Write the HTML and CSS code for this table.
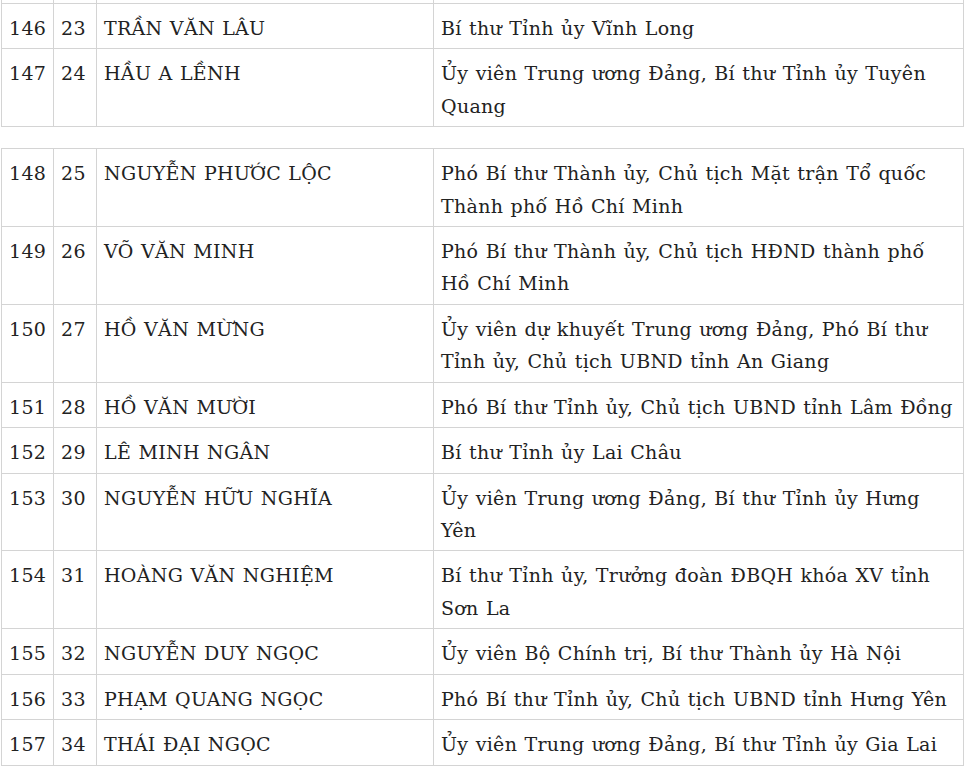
FILE: index.html
```html
<!DOCTYPE html>
<html lang="vi">
<head>
<meta charset="utf-8">
<title>Danh sách</title>
<link rel="stylesheet" href="styles.css">
</head>
<body>
<div class="sheet">
<table class="list list-first">
<colgroup><col class="c1"><col class="c2"><col class="c3"><col class="c4"></colgroup>
<tr class="spacer"><td></td><td></td><td></td><td></td></tr>
<tr><td>146</td><td>23</td><td>TRẦN VĂN LÂU</td><td>Bí thư Tỉnh ủy Vĩnh Long</td></tr>
<tr><td>147</td><td>24</td><td>HẦU A LỀNH</td><td>Ủy viên Trung ương Đảng, Bí thư Tỉnh ủy Tuyên Quang</td></tr>
</table>
<table class="list">
<colgroup><col class="c1"><col class="c2"><col class="c3"><col class="c4"></colgroup>
<tr><td>148</td><td>25</td><td>NGUYỄN PHƯỚC LỘC</td><td>Phó Bí thư Thành ủy, Chủ tịch Mặt trận Tổ quốc Thành phố Hồ Chí Minh</td></tr>
<tr><td>149</td><td>26</td><td>VÕ VĂN MINH</td><td>Phó Bí thư Thành ủy, Chủ tịch HĐND thành phố Hồ Chí Minh</td></tr>
<tr><td>150</td><td>27</td><td>HỒ VĂN MỪNG</td><td>Ủy viên dự khuyết Trung ương Đảng, Phó Bí thư Tỉnh ủy, Chủ tịch UBND tỉnh An Giang</td></tr>
<tr><td>151</td><td>28</td><td>HỒ VĂN MƯỜI</td><td>Phó Bí thư Tỉnh ủy, Chủ tịch UBND tỉnh Lâm Đồng</td></tr>
<tr><td>152</td><td>29</td><td>LÊ MINH NGÂN</td><td>Bí thư Tỉnh ủy Lai Châu</td></tr>
<tr><td>153</td><td>30</td><td>NGUYỄN HỮU NGHĨA</td><td>Ủy viên Trung ương Đảng, Bí thư Tỉnh ủy Hưng Yên</td></tr>
<tr><td>154</td><td>31</td><td>HOÀNG VĂN NGHIỆM</td><td>Bí thư Tỉnh ủy, Trưởng đoàn ĐBQH khóa XV tỉnh Sơn La</td></tr>
<tr><td>155</td><td>32</td><td>NGUYỄN DUY NGỌC</td><td>Ủy viên Bộ Chính trị, Bí thư Thành ủy Hà Nội</td></tr>
<tr><td>156</td><td>33</td><td>PHẠM QUANG NGỌC</td><td>Phó Bí thư Tỉnh ủy, Chủ tịch UBND tỉnh Hưng Yên</td></tr>
<tr><td>157</td><td>34</td><td>THÁI ĐẠI NGỌC</td><td>Ủy viên Trung ương Đảng, Bí thư Tỉnh ủy Gia Lai</td></tr>
</table>
</div>
</body>
</html>
```
FILE: styles.css
```css
html, body {
  margin: 0;
  padding: 0;
  background: #fff;
}
.sheet {
  padding-left: 1px;
  font-family: "DejaVu Serif", "Liberation Serif", serif;
  font-size: 19px;
  letter-spacing: 0.3px;
  word-spacing: 1px;
  color: #222;
}
.list {
  border-collapse: collapse;
  table-layout: fixed;
  width: 962px;
  margin-bottom: 21px;
}
.list td {
  border: 1px solid #d4d4d4;
  padding: 8px 7px 4.2px 7px;
  line-height: 32.3px;
  vertical-align: top;
}
.c1 { width: 52px; }
.c2 { width: 43px; }
.c3 { width: 337px; }
.c4 { width: 530px; }
.list-first .spacer td {
  border-top: none;
  padding: 0;
  height: 3px;
  line-height: 0;
}
```
